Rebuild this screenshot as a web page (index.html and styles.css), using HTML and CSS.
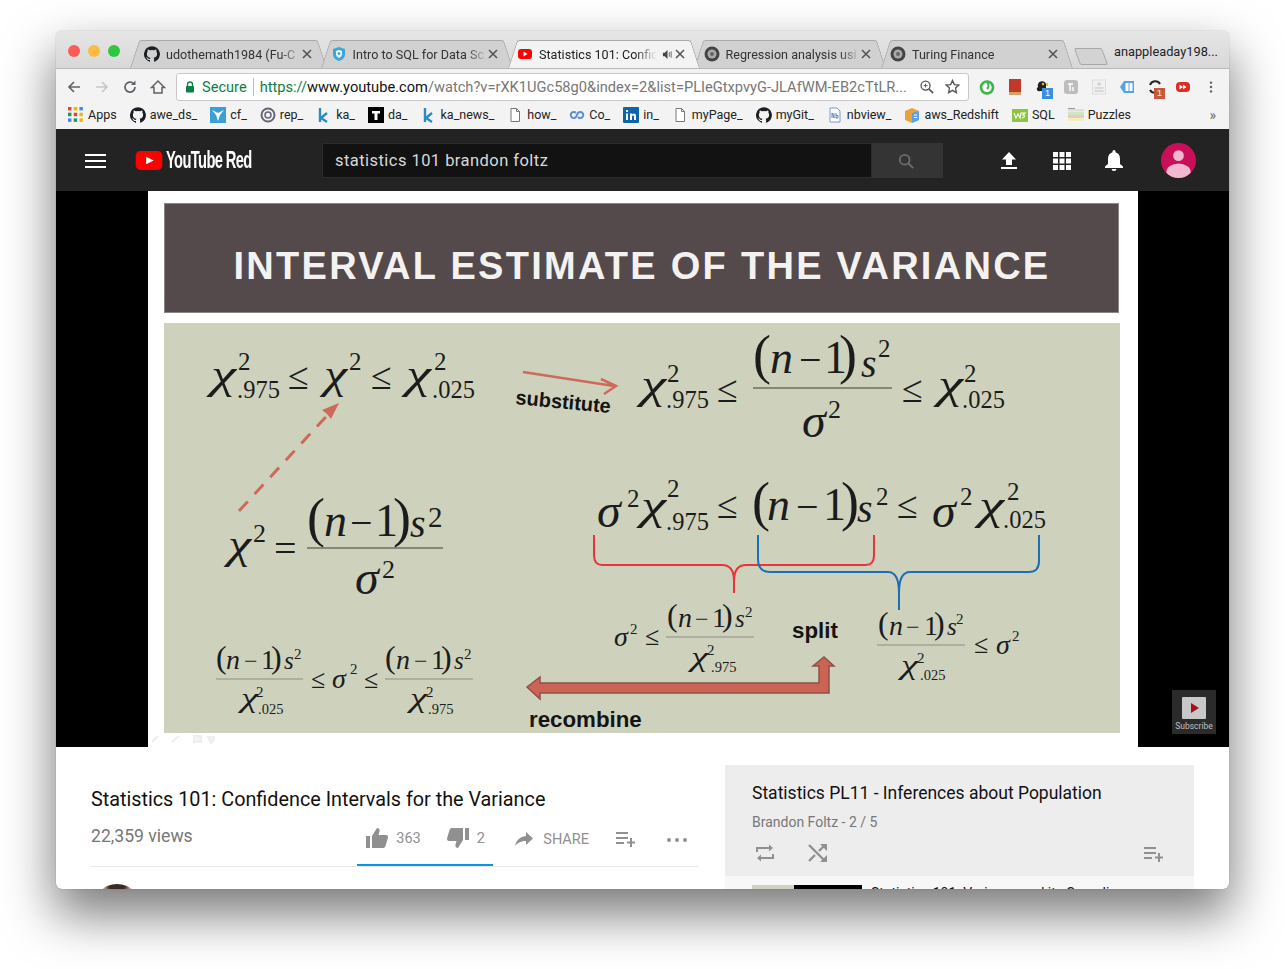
FILE: index.html
```html
<!DOCTYPE html>
<html>
    <head>
        <meta charset="utf-8">
        <title>Statistics 101: Confidence Intervals for the Variance</title>
        <link rel="stylesheet" href="styles.css">
    </head>
    <body>
        <div class="window">
            <!-- tab strip -->
            <div class="tabstrip">
                <div class="lights">
                    <span class="light red"></span>
                    <span class="light yellow"></span>
                    <span class="light green"></span>
                </div>
                <div class="tab first">
                    <svg class="fav" viewBox="0 0 16 16"><use href="#octo"/></svg>
                    <span class="tab-title">udothemath1984 (Fu-C</span>
                    <svg class="tab-x" viewBox="0 0 10 10"><use href="#close"/></svg>
                </div>
                <div class="tab">
                    <svg class="fav" viewBox="0 0 16 16"><path d="M8 1l6 2v5c0 4-3 6-6 7-3-1-6-3-6-7V3z" fill="#3ba6d8"/><path d="M8 4l3 1v3c0 2-1.500 3-3 4-1.500-1-3-2-3-4V5z" fill="#fff"/><circle cx="8" cy="7.500" r="1.500" fill="#3ba6d8"/></svg>
                    <span class="tab-title">Intro to SQL for Data Sc</span>
                    <svg class="tab-x" viewBox="0 0 10 10"><use href="#close"/></svg>
                </div>
                <div class="tab active">
                    <svg class="fav" viewBox="0 0 16 16"><rect x="1" y="3" width="14" height="10" rx="3" fill="#f00"/><path d="M6.500 5.500l4 2.500-4 2.500z" fill="#fff"/></svg>
                    <span class="tab-title short">Statistics 101: Confic</span>
                    <svg class="speaker" viewBox="0 0 12 12"><path d="M1 4h2l3-3v10L3 8H1z" fill="#444"/><path d="M8 3.500v5M10 2.500v7" stroke="#666" fill="none"/></svg>
                    <svg class="tab-x" viewBox="0 0 10 10"><use href="#close"/></svg>
                </div>
                <div class="tab">
                    <svg class="fav" viewBox="0 0 16 16"><use href="#gear"/></svg>
                    <span class="tab-title">Regression analysis usi</span>
                    <svg class="tab-x" viewBox="0 0 10 10"><use href="#close"/></svg>
                </div>
                <div class="tab">
                    <svg class="fav" viewBox="0 0 16 16"><use href="#gear"/></svg>
                    <span class="tab-title">Turing Finance</span>
                    <svg class="tab-x" viewBox="0 0 10 10"><use href="#close"/></svg>
                </div>
                <div class="newtab"></div>
                <div class="profile">anappleaday198...</div>
            </div>

            <!-- address bar -->
            <div class="toolbar">
                <svg class="nav" viewBox="0 0 16 16"><path d="M14 8H3M8 3L3 8l5 5" stroke="#5f6368" stroke-width="1.700" fill="none"/></svg>
                <svg class="nav" viewBox="0 0 16 16"><path d="M2 8h11M8 3l5 5-5 5" stroke="#c6c6c6" stroke-width="1.700" fill="none"/></svg>
                <svg class="nav" viewBox="0 0 16 16"><path d="M13 8a5 5 0 1 1-1.500-3.500" stroke="#5f6368" stroke-width="1.700" fill="none"/><path d="M13.500 1.500v4.500H9z" fill="#5f6368"/></svg>
                <svg class="nav" viewBox="0 0 16 16"><path d="M8 2L1.500 8.500H4V14h8V8.500h2.500z" stroke="#5f6368" stroke-width="1.500" fill="none"/></svg>
                <div class="omnibox">
                    <svg class="lock" viewBox="0 0 10 12"><path d="M2.500 5V3.500a2.500 2.500 0 0 1 5 0V5" stroke="#0b8043" stroke-width="1.300" fill="none"/><rect x="1" y="5" width="8" height="6.500" rx=".8" fill="#0b8043"/></svg>
                    <span class="secure">Secure</span>
                    <span class="url"><span class="url-scheme">https://</span><span class="url-host">www.youtube.com</span>/watch?v=rXK1UGc58g0&amp;index=2&amp;list=PLIeGtxpvyG-JLAfWM-EB2cTtLR...</span>
                    <svg class="omni-icon" viewBox="0 0 16 16"><circle cx="7" cy="7" r="4.800" stroke="#555" stroke-width="1.400" fill="none"/><path d="M10.500 10.500L15 15" stroke="#555" stroke-width="1.800"/><path d="M5 7h4M7 5v4" stroke="#555"/></svg>
                    <svg class="omni-icon" viewBox="0 0 16 16"><path d="M8 1.500l2 4.500 4.800.5-3.600 3.200 1 4.800L8 12.100l-4.200 2.400 1-4.800L1.200 6.500 6 6z" stroke="#555" stroke-width="1.400" fill="none"/></svg>
                </div>
                <div class="extensions">
                    <span class="ext"><svg viewBox="0 0 16 16"><circle cx="8" cy="8.500" r="6" stroke="#3cb54a" stroke-width="2.600" fill="#fff"/><path d="M8 3c2 2 2 5 0 7" stroke="#3cb54a" stroke-width="2" fill="none"/></svg></span>
                    <span class="ext"><svg viewBox="0 0 16 16"><path d="M2 0h12v13H3.500L2 15z" fill="#c0392b"/><path d="M2 13h12v3H2z" fill="#d9a066"/></svg></span>
                    <span class="ext"><svg viewBox="0 0 16 16"><path d="M3 8a4 4 0 0 1 8-3v7H5a2 2 0 0 1-2-4z" fill="#222"/><circle cx="8" cy="5" r="1.200" fill="#f1c40f"/><path d="M11 4h2v3h-2z" fill="#f1c40f"/></svg><span class="badge blue">1</span></span>
                    <span class="ext"><svg viewBox="0 0 16 16"><rect x="1" y="1" width="14" height="14" rx="3" fill="#bdbdbd"/><path d="M5 5h5M7 5v7M10 8v4" stroke="#fff" stroke-width="1.400" fill="none"/></svg></span>
                    <span class="ext"><svg viewBox="0 0 16 16"><rect x="1.500" y="1" width="13" height="14" fill="#f1f1f1" stroke="#ddd"/><path d="M3.500 9h9M8 3v4M6 5h4M3.500 12h9" stroke="#cfcfcf" stroke-width="1.300"/></svg></span>
                    <span class="ext"><svg viewBox="0 0 16 16"><path d="M5 2h10v12H5L1 8z" fill="#5aa2e8"/><rect x="6.500" y="4" width="7" height="8" fill="#fff"/><path d="M10 4v8" stroke="#5aa2e8"/></svg></span>
                    <span class="ext"><svg viewBox="0 0 16 16"><path d="M13 5a5.500 5.500 0 0 0-10 1M3 11a5.500 5.500 0 0 0 10-1" stroke="#222" stroke-width="2" fill="none"/></svg><span class="badge rust">1</span></span>
                    <span class="ext"><svg viewBox="0 0 16 16"><rect x="1" y="3" width="14" height="10" rx="4" fill="#e02b20"/><path d="M4.500 5.500L8 8l-3.500 2.500zM8 5.500L11.500 8 8 10.500z" fill="#fff"/></svg></span>
                </div>
                <svg class="kebab" viewBox="0 0 4 16"><circle cx="2" cy="3" r="1.400" fill="#5f6368"/><circle cx="2" cy="8" r="1.400" fill="#5f6368"/><circle cx="2" cy="13" r="1.400" fill="#5f6368"/></svg>
            </div>

            <!-- bookmarks -->
            <div class="bookmarks">
                <span class="bm"><svg viewBox="0 0 14 14"><rect x="0" y="0" width="3" height="3" fill="#e94235"/><rect x="5" y="0" width="3" height="3" fill="#f4b400"/><rect x="10" y="0" width="3" height="3" fill="#4285f4"/><rect x="0" y="5" width="3" height="3" fill="#0f9d58"/><rect x="5" y="5" width="3" height="3" fill="#e94235"/><rect x="10" y="5" width="3" height="3" fill="#f4b400"/><rect x="0" y="10" width="3" height="3" fill="#4285f4"/><rect x="5" y="10" width="3" height="3" fill="#0f9d58"/><rect x="10" y="10" width="3" height="3" fill="#f4b400"/></svg>Apps</span>
                <span class="bm"><svg viewBox="0 0 16 16"><use href="#octo"/></svg>awe_ds_</span>
                <span class="bm"><svg viewBox="0 0 16 16"><rect width="16" height="16" fill="#3a9fd8"/><path d="M2 3l6 3 6-3-4 5-2 6-2-6z" fill="#fff"/></svg>cf_</span>
                <span class="bm"><svg viewBox="0 0 16 16"><circle cx="8" cy="8" r="6.500" stroke="#667" stroke-width="2" fill="none"/><circle cx="8" cy="8" r="3" stroke="#667" stroke-width="1.500" fill="none"/></svg>rep_</span>
                <span class="bm"><svg viewBox="0 0 16 16"><path d="M4 1v14M11 6l-6 5 6 4" stroke="#2b8cc4" stroke-width="2.400" fill="none"/></svg>ka_</span>
                <span class="bm"><svg viewBox="0 0 16 16"><rect width="16" height="16" fill="#000"/><path d="M4 4h8v2.500H9.500V13h-3V6.500H4z" fill="#fff"/></svg>da_</span>
                <span class="bm"><svg viewBox="0 0 16 16"><path d="M4 1v14M11 6l-6 5 6 4" stroke="#2b8cc4" stroke-width="2.400" fill="none"/></svg>ka_news_</span>
                <span class="bm"><svg viewBox="0 0 16 16"><use href="#page"/></svg>how_</span>
                <span class="bm"><svg viewBox="0 0 16 16"><path d="M7 6a3 3 0 1 0 0 4l2-4a3 3 0 1 1 0 4" stroke="#5c8fd6" stroke-width="2" fill="none"/></svg>Co_</span>
                <span class="bm"><svg viewBox="0 0 16 16"><rect width="16" height="16" rx="1" fill="#0a66a8"/><path d="M3 6.500h2V13H3zM3 3h2v2H3zM7 6.500h2v1c1-1.500 4-1.500 4 1.500v4h-2V9.500c0-1.500-2-1.500-2 0V13H7z" fill="#fff"/></svg>in_</span>
                <span class="bm"><svg viewBox="0 0 16 16"><use href="#page"/></svg>myPage_</span>
                <span class="bm"><svg viewBox="0 0 16 16"><use href="#octo"/></svg>myGit_</span>
                <span class="bm"><svg viewBox="0 0 16 16"><path d="M3 1h7l3 3v11H3z" fill="#fff" stroke="#7a9cc6"/><path d="M5 11V6l2 5V6M9 6v5h2V8.500H9" stroke="#5b87c0" fill="none"/></svg>nbview_</span>
                <span class="bm"><svg viewBox="0 0 16 16"><path d="M1 4l7-3 7 3v9l-7 3-7-3z" fill="#e8a33d"/><path d="M8 6l7-2v9l-7 3z" fill="#5aa2e8"/><path d="M10 8h3M10 10.500h3" stroke="#fff"/></svg>aws_Redshift</span>
                <span class="bm"><svg viewBox="0 0 16 16"><rect y="2" width="16" height="13" fill="#8cc63f"/><path d="M2 6l2 5 2-4 2 4 1-5h4l-2 2c2 0 2 3-1 3" stroke="#fff" stroke-width="1.200" fill="none"/></svg>SQL</span>
                <span class="bm"><svg viewBox="0 0 16 16"><path d="M0 2h16v2.500H0z" fill="#ddd"/><path d="M0 5h16v3H0z" fill="#cce8c0"/><path d="M0 8h16v3H0z" fill="#f4c4c4"/><path d="M0 11h16v3H0z" fill="#f2f0b8"/><path d="M0 1h7v1H0z" fill="#999"/></svg>Puzzles</span>
                <span class="bm-more">»</span>
            </div>

            <!-- youtube masthead -->
            <div class="masthead">
                <svg class="burger" viewBox="0 0 21 14"><path d="M0 1h21M0 7h21M0 13h21" stroke="#fff" stroke-width="2"/></svg>
                <div class="logo">
                    <svg viewBox="0 0 28 20"><rect width="28" height="20" rx="5" fill="#f00"/><path d="M11 6l8 4-8 4z" fill="#fff"/></svg>
                    <span class="logo-text">YouTube Red</span>
                </div>
                <div class="search">
                    <div class="search-input">statistics 101 brandon foltz</div>
                    <div class="search-btn">
                        <svg viewBox="0 0 18 18"><circle cx="7.500" cy="7.500" r="5.500" stroke="#6b6b6b" stroke-width="2" fill="none"/><path d="M11.500 11.500L17 17" stroke="#6b6b6b" stroke-width="2.200"/></svg>
                    </div>
                </div>
                <div class="mast-icons">
                    <svg class="upload" viewBox="0 0 16 18"><path d="M8 0l7 7.500h-4V13H5V7.500H1z" fill="#fff"/><path d="M0 15h16v2H0z" fill="#fff"/></svg>
                    <svg class="apps" viewBox="0 0 18 18"><g fill="#fff"><rect width="5" height="5"/><rect x="6.500" width="5" height="5"/><rect x="13" width="5" height="5"/><rect y="6.500" width="5" height="5"/><rect x="6.500" y="6.500" width="5" height="5"/><rect x="13" y="6.500" width="5" height="5"/><rect y="13" width="5" height="5"/><rect x="6.500" y="13" width="5" height="5"/><rect x="13" y="13" width="5" height="5"/></g></svg>
                    <svg class="bell" viewBox="0 0 18 21"><path d="M9 0a1.500 1.500 0 0 1 1.500 1.500v.7C13.500 3 15 5.500 15 8.500V14l3 2.500V18H0v-1.500L3 14V8.500c0-3 1.500-5.500 4.500-6.300v-.7A1.500 1.500 0 0 1 9 0zM6.500 19h5a2.500 2 0 0 1-5 0z" fill="#fff"/></svg>
                    <svg class="avatar" viewBox="0 0 36 36"><defs><clipPath id="av"><circle cx="18" cy="18" r="18"/></clipPath></defs><g clip-path="url(#av)"><rect width="36" height="36" fill="#c90f58"/><circle cx="18" cy="13" r="5.500" fill="#f1b8cf"/><ellipse cx="18" cy="30" rx="12.500" ry="9" fill="#f1b8cf"/></g></svg>
                </div>
            </div>

            <!-- video -->
            <div class="player">
                <div class="frame">
                    <div class="slide-head">INTERVAL ESTIMATE OF THE VARIANCE</div>
                    <svg class="slide" viewBox="0 0 956 410" width="956" height="410">
                        <!-- row one, left -->
                        <g class="m">
                            <text class="mi" x="47" y="65" font-size="42" textLength="25" lengthAdjust="spacingAndGlyphs">χ</text>
                            <text x="74" y="47" font-size="25">2</text>
                            <text x="73" y="75" font-size="24.500">.975</text>
                            <text x="124" y="66" font-size="38">≤</text>
                            <text class="mi" x="160" y="65" font-size="42" textLength="23" lengthAdjust="spacingAndGlyphs">χ</text>
                            <text x="185" y="47" font-size="25">2</text>
                            <text x="207" y="66" font-size="38">≤</text>
                            <text class="mi" x="242" y="65" font-size="42" textLength="25" lengthAdjust="spacingAndGlyphs">χ</text>
                            <text x="270" y="47" font-size="25">2</text>
                            <text x="268" y="75" font-size="24.500">.025</text>
                        </g>

                        <!-- substitute arrow -->
                        <path class="red-line" d="M359 49L450 63M437 56L452 63L440 71"/>
                        <text class="label small" transform="translate(351 81) rotate(5.500)">substitute</text>

                        <!-- row one, right -->
                        <g class="m">
                            <text class="mi" x="477" y="75" font-size="42" textLength="25" lengthAdjust="spacingAndGlyphs">χ</text>
                            <text x="503" y="59" font-size="25">2</text>
                            <text x="502" y="85" font-size="24.500">.975</text>
                            <text x="553" y="79" font-size="38">≤</text>
                            <text x="589" y="50" font-size="54">(</text>
                            <text class="mi" x="606" y="50" font-size="46">n</text>
                            <text x="635" y="50" font-size="40">−</text>
                            <text x="660" y="50" font-size="46">1</text>
                            <text x="675" y="50" font-size="54">)</text>
                            <text class="mi" x="697" y="54" font-size="40">s</text>
                            <text x="714" y="34" font-size="25">2</text>
                            <text class="mi" x="638" y="114" font-size="48">σ</text>
                            <text x="664" y="95" font-size="26">2</text>
                            <text x="738" y="79" font-size="38">≤</text>
                            <text class="mi" x="774" y="75" font-size="42" textLength="25" lengthAdjust="spacingAndGlyphs">χ</text>
                            <text x="800" y="59" font-size="25">2</text>
                            <text x="798" y="85" font-size="24.500">.025</text>
                        </g>
                        <path class="rule" d="M589 65H728"/>

                        <!-- chi square definition -->
                        <path class="red-line dashed" d="M75 188L170 85"/>
                        <path class="red-fill" d="M175 80L158 87L163 91L167 96z"/>
                        <g class="m">
                            <text class="mi" x="64" y="235" font-size="42" textLength="23" lengthAdjust="spacingAndGlyphs">χ</text>
                            <text x="89" y="219" font-size="26">2</text>
                            <text x="110" y="239" font-size="40">=</text>
                            <text x="143" y="213" font-size="54">(</text>
                            <text class="mi" x="160" y="213" font-size="46">n</text>
                            <text x="186" y="213" font-size="40">−</text>
                            <text x="211" y="213" font-size="46">1</text>
                            <text x="229" y="213" font-size="54">)</text>
                            <text class="mi" x="246" y="214" font-size="40">s</text>
                            <text x="264" y="204" font-size="29">2</text>
                            <text class="mi" x="191" y="271" font-size="48">σ</text>
                            <text x="218" y="255" font-size="26">2</text>
                        </g>
                        <path class="rule" d="M143 225H279"/>

                        <!-- row two -->
                        <g class="m">
                            <text class="mi" x="433" y="204" font-size="48">σ</text>
                            <text x="463" y="184" font-size="25">2</text>
                            <text class="mi" x="477" y="196" font-size="42" textLength="25" lengthAdjust="spacingAndGlyphs">χ</text>
                            <text x="503" y="174" font-size="25">2</text>
                            <text x="502" y="207" font-size="24.500">.975</text>
                            <text x="553" y="195" font-size="38">≤</text>
                            <text x="588" y="197" font-size="54">(</text>
                            <text class="mi" x="603" y="197" font-size="46">n</text>
                            <text x="632" y="197" font-size="40">−</text>
                            <text x="659" y="197" font-size="46">1</text>
                            <text x="677" y="197" font-size="54">)</text>
                            <text class="mi" x="693" y="199" font-size="40">s</text>
                            <text x="712" y="182" font-size="25">2</text>
                            <text x="733" y="195" font-size="38">≤</text>
                            <text class="mi" x="768" y="204" font-size="48">σ</text>
                            <text x="796" y="182" font-size="25">2</text>
                            <text class="mi" x="815" y="196" font-size="42" textLength="25" lengthAdjust="spacingAndGlyphs">χ</text>
                            <text x="843" y="177" font-size="25">2</text>
                            <text x="839" y="205" font-size="24.500">.025</text>
                        </g>

                        <!-- braces -->
                        <path class="brace red-b" d="M430 212V232Q430 242 438 242H558Q570 242 570 258V270M570 258Q570 242 582 242H702Q710 242 710 232V212"/>
                        <path class="brace blue-b" d="M594 212V236Q594 249 606 249H724Q735 249 735 270V287M735 270Q735 249 746 249H865Q875 249 875 238V212"/>

                        <!-- split, right hand -->
                        <g class="m">
                            <text class="mi" x="450" y="323" font-size="28">σ</text>
                            <text x="466" y="311" font-size="15">2</text>
                            <text x="481" y="322" font-size="26">≤</text>
                            <text x="503" y="303" font-size="32">(</text>
                            <text class="mi" x="514" y="304" font-size="28">n</text>
                            <text x="531" y="304" font-size="24">−</text>
                            <text x="548" y="304" font-size="28">1</text>
                            <text x="558" y="303" font-size="32">)</text>
                            <text class="mi" x="571" y="304" font-size="25">s</text>
                            <text x="581" y="294" font-size="15">2</text>
                            <text class="mi" x="527" y="343" font-size="28" textLength="17" lengthAdjust="spacingAndGlyphs">χ</text>
                            <text x="543" y="332" font-size="15">2</text>
                            <text x="547" y="349" font-size="14.500">.975</text>

                            <text x="714" y="311" font-size="32">(</text>
                            <text class="mi" x="725" y="312" font-size="28">n</text>
                            <text x="742" y="312" font-size="24">−</text>
                            <text x="760" y="312" font-size="28">1</text>
                            <text x="770" y="311" font-size="32">)</text>
                            <text class="mi" x="783" y="312" font-size="25">s</text>
                            <text x="792" y="301" font-size="15">2</text>
                            <text class="mi" x="737" y="351" font-size="28" textLength="17" lengthAdjust="spacingAndGlyphs">χ</text>
                            <text x="753" y="340" font-size="15">2</text>
                            <text x="756" y="357" font-size="14.500">.025</text>
                            <text x="810" y="330" font-size="26">≤</text>
                            <text class="mi" x="832" y="331" font-size="28">σ</text>
                            <text x="848" y="318" font-size="15">2</text>
                        </g>
                        <path class="rule thin-rule" d="M502 314H590M713 322H801"/>
                        <text class="label" x="628" y="315">split</text>

                        <!-- split, left hand -->
                        <g class="m">
                            <text x="52" y="345" font-size="32">(</text>
                            <text class="mi" x="62" y="346" font-size="28">n</text>
                            <text x="80" y="346" font-size="24">−</text>
                            <text x="97" y="346" font-size="28">1</text>
                            <text x="107" y="345" font-size="32">)</text>
                            <text class="mi" x="120" y="346" font-size="25">s</text>
                            <text x="130" y="336" font-size="15">2</text>
                            <text class="mi" x="77" y="384" font-size="28" textLength="17" lengthAdjust="spacingAndGlyphs">χ</text>
                            <text x="92" y="374" font-size="15">2</text>
                            <text x="94" y="391" font-size="14.500">.025</text>
                            <text x="147" y="365" font-size="26">≤</text>
                            <text class="mi" x="168" y="365" font-size="28">σ</text>
                            <text x="186" y="351" font-size="15">2</text>
                            <text x="200" y="365" font-size="26">≤</text>

                            <text x="221" y="345" font-size="32">(</text>
                            <text class="mi" x="232" y="346" font-size="28">n</text>
                            <text x="250" y="346" font-size="24">−</text>
                            <text x="267" y="346" font-size="28">1</text>
                            <text x="277" y="345" font-size="32">)</text>
                            <text class="mi" x="290" y="346" font-size="25">s</text>
                            <text x="300" y="336" font-size="15">2</text>
                            <text class="mi" x="246" y="384" font-size="28" textLength="17" lengthAdjust="spacingAndGlyphs">χ</text>
                            <text x="262" y="374" font-size="15">2</text>
                            <text x="264" y="391" font-size="14.500">.975</text>
                        </g>
                        <path class="rule thin-rule" d="M52 356H139M221 356H309"/>

                        <!-- recombine arrow -->
                        <path class="block-arrow" d="M363 364L376 354V360H655V343H649L660 334L670 343H665V370H376V376z"/>
                        <text class="label" x="365" y="404">recombine</text>
                    </svg>
                    <svg class="ghost" viewBox="0 0 66 10"><path d="M2 8l6-6M22 8l7-6M44 2h7v6h-7zM58 3h6v3l-3 3z" stroke="#eee" stroke-width="2" fill="#f2f2f2"/></svg>
                </div>
                <div class="subscribe">
                    <span class="sub-btn"><svg viewBox="0 0 24 22"><rect width="24" height="22" rx="1" fill="#c8c8c8"/><path d="M9 6l8 5-8 5z" fill="#a40f1b"/></svg></span>
                    <span class="sub-text">Subscribe</span>
                </div>
            </div>

            <!-- below the video -->
            <div class="below">
                <div class="primary">
                    <h1 class="video-title">Statistics 101: Confidence Intervals for the Variance</h1>
                    <div class="meta-row">
                        <span class="views">22,359 views</span>
                        <div class="actions">
                            <div class="rating">
                                <span class="action"><svg viewBox="0 0 22 20"><path d="M0 8h4v12H0zM6 20V8l5-8c2 0 3 1.500 2.500 3.500L12.500 7H20c1.500 0 2 1 2 2.500L19.500 18c-.5 1.500-1.500 2-3 2z" fill="#909090"/></svg>363</span>
                                <span class="action"><svg viewBox="0 0 22 20"><path d="M22 12h-4V0h4zM16 0v12l-5 8c-2 0-3-1.500-2.500-3.500L9.500 13H2c-1.500 0-2-1-2-2.500L2.500 2C3 .5 4 0 5.500 0z" fill="#909090"/></svg>2</span>
                            </div>
                            <span class="action share"><svg viewBox="0 0 18 14"><path d="M11 0l7 6.500L11 13V9C6 9 3 10.500 0 14c1-5 4-9 11-10z" fill="#909090"/></svg>SHARE</span>
                            <svg class="addlist" viewBox="0 0 20 16"><use href="#addlist"/></svg>
                            <svg class="more" viewBox="0 0 20 4"><circle cx="2" cy="2" r="2" fill="#909090"/><circle cx="10" cy="2" r="2" fill="#909090"/><circle cx="18" cy="2" r="2" fill="#909090"/></svg>
                        </div>
                    </div>
                    <div class="owner-row"><span class="owner-pic"></span></div>
                </div>
                <div class="playlist">
                    <div class="pl-head">
                        <div class="pl-title">Statistics PL11 - Inferences about Population</div>
                        <div class="pl-sub">Brandon Foltz - 2 / 5</div>
                        <div class="pl-icons">
                            <svg viewBox="0 0 20 20"><path d="M2 9V5h12M18 11v4H6" stroke="#909090" stroke-width="2" fill="none"/><path d="M14 1.500l4 3.500-4 3.500zM6 11.500L2 15l4 3.500z" fill="#909090"/></svg>
                            <svg viewBox="0 0 20 20"><path d="M1 2l16 16M1 18L7 12M11 8l6-6" stroke="#909090" stroke-width="2.400" fill="none"/><path d="M12 1h7v7zM12 19h7v-7z" fill="#909090"/></svg>
                            <svg class="pl-add" viewBox="0 0 20 16"><use href="#addlist"/></svg>
                        </div>
                    </div>
                    <div class="pl-item">
                        <span class="pl-thumb"><span class="pl-thumb-slide"></span><span class="pl-thumb-dark"></span></span>
                        <span class="pl-item-title">Statistics 101: Variance and its Sampling</span>
                    </div>
                </div>
            </div>
        </div>

        <!-- shared icons -->
        <svg class="sprites" width="0" height="0">
            <defs>
                <g id="octo"><path d="M8 .2a8 8 0 0 0-2.500 15.600c.4.1.5-.2.5-.4v-1.400c-2.200.5-2.700-1-2.700-1-.4-.9-.9-1.200-.9-1.200-.7-.5.1-.5.1-.5.8.1 1.200.8 1.200.8.7 1.200 1.900.9 2.300.7.100-.5.300-.9.500-1.100-1.800-.2-3.600-.9-3.600-4 0-.9.300-1.600.8-2.100-.1-.2-.4-1 .1-2.100 0 0 .7-.2 2.200.8a7.500 7.500 0 0 1 4 0c1.500-1 2.200-.8 2.200-.8.500 1.100.2 1.900.1 2.100.5.600.8 1.300.8 2.100 0 3.100-1.900 3.700-3.600 3.900.3.300.6.800.6 1.500v2.200c0 .2.100.5.600.4A8 8 0 0 0 8 .2z" fill="#1b1f23"/></g>
                <g id="gear"><circle cx="8" cy="8" r="7.500" fill="#444"/><circle cx="8" cy="8" r="4.500" fill="#aaa"/><circle cx="8" cy="8" r="2" fill="#666"/></g>
                <g id="page"><path d="M4 1.500h5.500L12.500 4.500V14.500H4z" fill="#fff" stroke="#777"/><path d="M9.500 1.500V4.500H12.500" fill="none" stroke="#777"/></g>
                <g id="addlist"><path d="M0 2h12M0 7h12M0 12h8M15 7v9M11 11.500h8" stroke="#909090" stroke-width="2" fill="none"/></g>
                <g id="close"><path d="M1 1l8 8M9 1l-8 8" stroke="#555" stroke-width="1.600"/></g>
            </defs>
        </svg>
    </body>
</html>
```

FILE: styles.css
```css
* {
    box-sizing: border-box;
}

body {
    background: #fff;
    font-family: "Liberation Sans", sans-serif;
    height: 969px;
    margin: 0;
    overflow: hidden;
    padding: 31px 56px 0;
}

.sprites {
    position: absolute;
}

.window {
    background: #fff;
    border-radius: 6px;
    box-shadow: 0 0 1px rgba(0, 0, 0, 0.45), 0 24px 50px 2px rgba(0, 0, 0, 0.52);
    height: 858px;
    overflow: hidden;
    width: 1173px;
}

/* tab strip */
.tabstrip {
    align-items: flex-end;
    background: linear-gradient(#e6e6e6, #d8d8d8);
    display: flex;
    height: 37px;
    padding-left: 78.5px;
    position: relative;
}

.lights {
    display: flex;
    gap: 8px;
    left: 12px;
    position: absolute;
    top: 14px;
}

.light {
    border-radius: 50%;
    height: 12px;
    width: 12px;
}

.light.red { background: #fc5b57; }
.light.yellow { background: #fdbc40; }
.light.green { background: #2ec840; }

.tab {
    align-items: center;
    color: #333;
    display: flex;
    flex: none;
    font-family: Roboto, sans-serif;
    font-size: 12.6px;
    height: 28px;
    margin-right: -5.5px;
    padding: 0 15px 0 9.5px;
    position: relative;
    width: 192px;
    z-index: 0;
}

.tab.first {
    margin-left: -5px;
    padding-left: 14.5px;
    width: 197px;
}

.tab::before,
.tab::after {
    background: #d1d1d1;
    border-top: 1px solid #a8a8a8;
    bottom: 0;
    content: "";
    position: absolute;
    top: 0;
    width: 50%;
    z-index: -1;
}

.tab::before {
    border-left: 1px solid #a8a8a8;
    border-top-left-radius: 3px;
    left: 0;
    transform: skewX(-18deg);
    transform-origin: bottom left;
}

.tab::after {
    border-right: 1px solid #a8a8a8;
    border-top-right-radius: 3px;
    right: 0;
    transform: skewX(18deg);
    transform-origin: bottom right;
}

.tab.active {
    color: #222;
    z-index: 2;
}

.tab.active::before,
.tab.active::after {
    background: #f3f3f3;
}

.fav {
    flex: none;
    height: 16px;
    margin-right: 6px;
    width: 16px;
}

.tab-title {
    flex: 1;
    -webkit-mask-image: linear-gradient(to left, transparent, #000 22px);
    mask-image: linear-gradient(to left, transparent, #000 22px);
    overflow: hidden;
    white-space: nowrap;
}

.tab-title.short {
    flex: none;
    width: 118px;
}

.speaker {
    flex: none;
    height: 11px;
    margin-left: 5px;
    width: 11px;
}

.tab-x {
    flex: none;
    height: 10px;
    margin-left: auto;
    width: 10px;
}

.newtab {
    background: #d3d3d3;
    border: 1px solid #a8a8a8;
    border-radius: 2px;
    flex: none;
    height: 17px;
    margin: 0 0 3px 10px;
    transform: skewX(20deg);
    width: 28px;
}

.profile {
    color: #222;
    flex: 1;
    font-family: Roboto, sans-serif;
    font-size: 12.800px;
    padding: 0 11px 9px 0;
    text-align: right;
    white-space: nowrap;
}

/* address bar */
.toolbar {
    align-items: center;
    background: #f3f3f3;
    border-top: 1px solid #b8b8b8;
    display: flex;
    height: 36px;
    padding: 0 16px 0 10px;
}

.nav {
    flex: none;
    height: 16px;
    margin-right: 12px;
    width: 16px;
}

.omnibox {
    align-items: center;
    background: #fff;
    border: 1px solid #c8c8c8;
    border-radius: 3px;
    display: flex;
    height: 28px;
    margin-left: -2px;
    padding: 0 8px;
    width: 793px;
}

.lock {
    flex: none;
    height: 12px;
    margin-right: 7px;
    width: 10px;
}

.secure {
    border-right: 1px solid #bbb;
    color: #0b8043;
    font-family: Roboto, sans-serif;
    font-size: 14.600px;
    margin-right: 6px;
    padding-right: 6px;
}

.url {
    color: #777;
    flex: 1;
    font-family: Roboto, sans-serif;
    font-size: 14.650px;
    overflow: hidden;
    white-space: nowrap;
}

.url-scheme { color: #0b8043; }
.url-host { color: #111; }

.omni-icon {
    flex: none;
    height: 15px;
    margin-left: 11px;
    width: 15px;
}

.extensions {
    align-items: center;
    display: flex;
    flex: 1;
    gap: 12px;
    margin-left: 10px;
}

.ext {
    display: block;
    flex: none;
    height: 16px;
    position: relative;
    width: 16px;
}

.ext svg {
    display: block;
}

.badge {
    color: #fff;
    font-size: 9px;
    height: 11px;
    left: 7px;
    line-height: 11px;
    position: absolute;
    text-align: center;
    top: 9px;
    width: 11px;
}

.badge.blue { background: #3a8fe0; }
.badge.rust { background: #c8583a; }

.kebab {
    flex: none;
    height: 14px;
    width: 4px;
}

/* bookmarks */
.bookmarks {
    align-items: center;
    background: #f3f3f3;
    border-bottom: 1px solid #222;
    color: #222;
    display: flex;
    font-family: Roboto, sans-serif;
    font-size: 12.500px;
    height: 26px;
    padding: 0 0 4px 12px;
    position: relative;
}

.bm {
    align-items: center;
    display: flex;
    gap: 4px;
    margin-right: 13px;
    white-space: nowrap;
}

.bm svg {
    flex: none;
    height: 16px;
    width: 16px;
}

.bm-more {
    color: #666;
    font-size: 14px;
    position: absolute;
    right: 13px;
}

/* masthead */
.masthead {
    align-items: center;
    background: #232323;
    display: flex;
    height: 61px;
    padding: 0 33px 0 29px;
}

.burger {
    flex: none;
    height: 14px;
    width: 21px;
}

.logo {
    align-items: center;
    display: flex;
    gap: 3px;
    margin-left: 29px;
    width: 187px;
}

.logo svg {
    flex: none;
    height: 19px;
    width: 28px;
}

.logo-text {
    color: #fff;
    font-family: "Liberation Sans", sans-serif;
    font-size: 23px;
    font-weight: bold;
    letter-spacing: -1px;
    transform: scaleX(0.64);
    transform-origin: left center;
    white-space: nowrap;
}

.search {
    display: flex;
    height: 35px;
    width: 621px;
}

.search-input {
    background: #121212;
    border: 1px solid #2c2c2c;
    color: #d9d9d9;
    flex: 1;
    font-family: Roboto, sans-serif;
    font-size: 16.500px;
    letter-spacing: 0.45px;
    line-height: 33px;
    padding-left: 12px;
}

.search-btn {
    align-items: center;
    background: #343434;
    display: flex;
    justify-content: center;
    padding-right: 3px;
    width: 71px;
}

.search-btn svg {
    height: 16px;
    width: 16px;
}

.mast-icons {
    align-items: center;
    display: flex;
    flex: 1;
    justify-content: flex-end;
}

.upload {
    height: 18px;
    margin-right: 36px;
    width: 16px;
}

.apps {
    height: 18px;
    margin-right: 34px;
    width: 18px;
}

.bell {
    height: 21px;
    margin-right: 38px;
    width: 18px;
}

.avatar {
    height: 35px;
    width: 35px;
}

/* player */
.player {
    background: #000;
    display: flex;
    height: 556px;
    justify-content: center;
    position: relative;
}

.frame {
    background: #fff;
    padding: 12px 18px 0 16px;
    position: relative;
    width: 990px;
}

.slide-head {
    background: #544a4b;
    border: 1px solid #8b8485;
    color: #f4f2f0;
    font-family: "Liberation Sans", sans-serif;
    font-size: 38px;
    font-weight: bold;
    height: 110px;
    letter-spacing: 2.28px;
    line-height: 124px;
    margin-bottom: 10px;
    padding-left: 69px;
    white-space: nowrap;
    width: 955px;
}

.slide {
    background: #ced2bc;
    display: block;
}

.ghost {
    bottom: 3px;
    height: 10px;
    left: 2px;
    position: absolute;
    width: 66px;
}

/* slide math */
.m text {
    fill: #1c1c1c;
    font-family: "Liberation Serif", serif;
}

.m text.mi {
    font-style: italic;
}

.rule {
    fill: none;
    stroke: #6b705e;
    stroke-width: 1.300;
}

.thin-rule {
    stroke: #8a8e7c;
    stroke-width: 1;
}

.label {
    fill: #141414;
    font-family: "Liberation Sans", sans-serif;
    font-size: 22.300px;
    font-weight: bold;
}

.label.small {
    font-size: 20px;
}

.red-line {
    fill: none;
    stroke: #cd6a5c;
    stroke-width: 2.500;
}

.red-line.dashed {
    stroke-dasharray: 13 10;
    stroke-width: 3;
}

.red-fill {
    fill: #cd6a5c;
}

.brace {
    fill: none;
    stroke-width: 2;
}

.red-b { stroke: #e8343c; }
.blue-b { stroke: #1c6fb4; }

.block-arrow {
    fill: #cc6455;
    stroke: #8d5145;
    stroke-width: 1.500;
}

.subscribe {
    align-items: center;
    background: #2b2b2b;
    bottom: 13px;
    display: flex;
    flex-direction: column;
    height: 44px;
    padding-top: 7px;
    position: absolute;
    right: 13px;
    width: 44px;
}

.sub-btn {
    display: block;
    height: 22px;
    width: 24px;
}

.sub-text {
    color: #c0c0c0;
    font-family: Roboto, sans-serif;
    font-size: 8.500px;
    margin-top: 2px;
}

/* below the video */
.below {
    display: flex;
    height: 142px;
    overflow: hidden;
    padding: 18px 0 0 35px;
}

.primary {
    width: 608px;
}

.video-title {
    color: #111;
    font-family: Roboto, sans-serif;
    font-size: 19.800px;
    font-weight: normal;
    line-height: 24px;
    margin: 23px 0 0;
}

.meta-row {
    align-items: center;
    border-bottom: 1px solid #e8e8e8;
    display: flex;
    height: 55px;
    justify-content: space-between;
}

.views {
    color: #777;
    font-family: Roboto, sans-serif;
    font-size: 17.600px;
    margin-bottom: 7px;
}

.actions {
    align-items: center;
    align-self: stretch;
    display: flex;
}

.rating {
    align-items: center;
    align-self: stretch;
    border-bottom: 2px solid #0b93e6;
    display: flex;
    gap: 26px;
    padding: 0 7px 0 9px;
    width: 136px;
}

.action {
    align-items: center;
    color: #909090;
    display: flex;
    font-family: Roboto, sans-serif;
    font-size: 14.500px;
    gap: 8px;
}

.action svg {
    flex: none;
    height: 20px;
    width: 22px;
}

.action.share {
    gap: 10px;
    margin-left: 22px;
}

.action.share svg {
    height: 14px;
    width: 18px;
}

.addlist {
    height: 16px;
    margin-left: 27px;
    width: 20px;
}

.more {
    height: 4px;
    margin: 2px 12px 0 31px;
    width: 20px;
}

.owner-row {
    padding: 17px 0 0 2px;
}

.owner-pic {
    background: radial-gradient(circle at 50% 0, #3a2a26 0, #3a2a26 8px, #c9a48e 14px);
    border-radius: 50%;
    display: block;
    height: 48px;
    width: 48px;
}

.playlist {
    background: #f7f7f7;
    margin-left: 26px;
    width: 469px;
}

.pl-head {
    background: #ededed;
    height: 111px;
    padding: 17px 27px 0;
}

.pl-title {
    color: #111;
    font-family: Roboto, sans-serif;
    font-size: 17.500px;
    line-height: 22px;
}

.pl-sub {
    color: #777;
    font-family: Roboto, sans-serif;
    font-size: 14px;
    margin-top: 10px;
}

.pl-icons {
    align-items: center;
    display: flex;
    gap: 33px;
    margin-top: 13px;
    padding-left: 3px;
}

.pl-icons svg {
    height: 20px;
    width: 20px;
}

.pl-icons .pl-add {
    height: 16px;
    margin: 2px 3px 0 auto;
}

.pl-item {
    align-items: flex-start;
    display: flex;
    padding: 9px 27px 0;
}

.pl-thumb {
    display: flex;
    flex: none;
    height: 40px;
    width: 110px;
}

.pl-thumb-slide {
    background: #cfd2be;
    width: 42px;
}

.pl-thumb-dark {
    background: #000;
    flex: 1;
}

.pl-item-title {
    color: #111;
    font-family: Roboto, sans-serif;
    font-size: 14px;
    margin-left: 9px;
    white-space: nowrap;
}
```
